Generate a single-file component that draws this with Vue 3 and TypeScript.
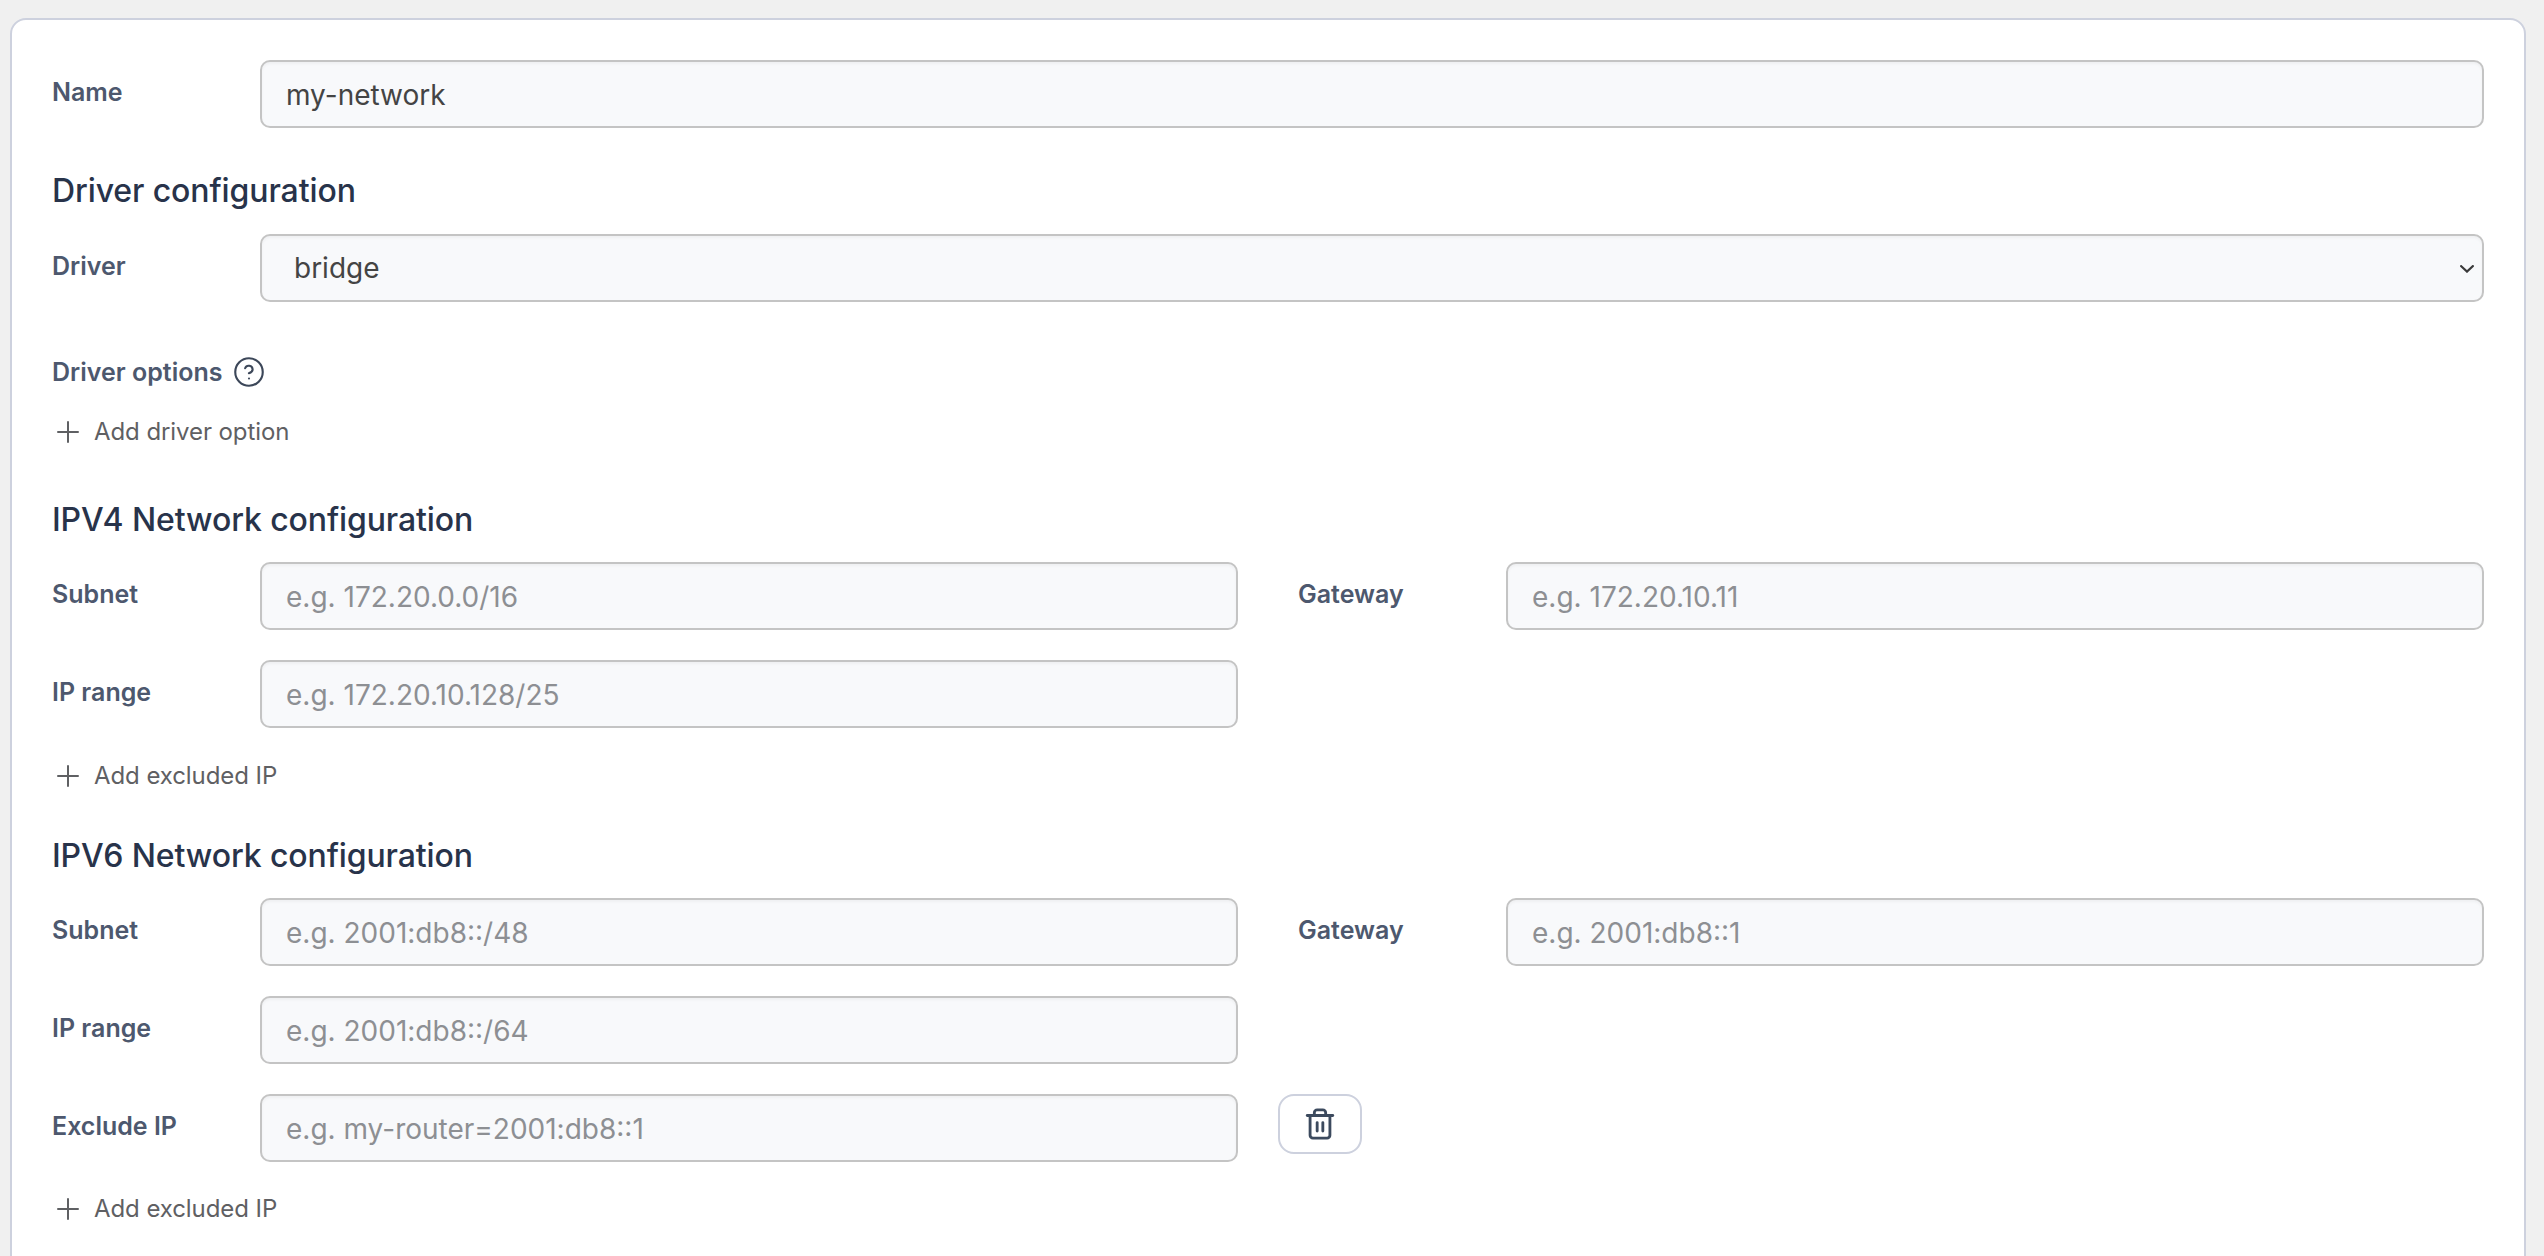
<script setup lang="ts">
interface Field { label: string; placeholder: string }
const ipv4: Field[] = [
  { label: 'Subnet', placeholder: 'e.g. 172.20.0.0/16' },
  { label: 'Gateway', placeholder: 'e.g. 172.20.10.11' },
  { label: 'IP range', placeholder: 'e.g. 172.20.10.128/25' },
]
const ipv6: Field[] = [
  { label: 'Subnet', placeholder: 'e.g. 2001:db8::/48' },
  { label: 'Gateway', placeholder: 'e.g. 2001:db8::1' },
  { label: 'IP range', placeholder: 'e.g. 2001:db8::/64' },
]
</script>

<template>
  <div class="page">
    <form class="card" @submit.prevent>
      <div class="row">
        <label class="label">Name</label>
        <input class="control" value="my-network" />
      </div>

      <h2 class="heading first">Driver configuration</h2>
      <div class="row">
        <label class="label">Driver</label>
        <div class="select-wrap">
          <select class="control select">
            <option>bridge</option>
          </select>
          <svg class="chevron" viewBox="0 0 14 8" fill="none" stroke="currentColor" stroke-width="2.2" stroke-linecap="square" stroke-linejoin="miter">
            <path d="M1.2 1.2 7 6.6l5.8-5.4" />
          </svg>
        </div>
      </div>

      <div class="options-label">
        <span>Driver options</span>
        <svg class="help" viewBox="0 0 24 24" fill="none" stroke="currentColor" stroke-width="1.7" stroke-linecap="round" stroke-linejoin="round">
          <circle cx="12" cy="12" r="11" />
          <path d="M8.9 9a3.1 3.1 0 0 1 6 1c0 2-3 3-3 3" />
          <path d="M12 17.2h.01" />
        </svg>
      </div>
      <button type="button" class="add add-driver">
        <svg viewBox="0 0 24 24" fill="none" stroke="currentColor" stroke-width="2" stroke-linecap="round"><path d="M12 2v20M2 12h20" /></svg>
        Add driver option
      </button>

      <h2 class="heading v4">IPV4 Network configuration</h2>
      <div class="grid">
        <div v-for="f in ipv4" :key="f.label" class="cell">
          <label class="label">{{ f.label }}</label>
          <input class="control" :placeholder="f.placeholder" />
        </div>
      </div>
      <button type="button" class="add add-ip first-ip">
        <svg viewBox="0 0 24 24" fill="none" stroke="currentColor" stroke-width="2" stroke-linecap="round"><path d="M12 2v20M2 12h20" /></svg>
        Add excluded IP
      </button>

      <h2 class="heading v6">IPV6 Network configuration</h2>
      <div class="grid">
        <div v-for="f in ipv6" :key="f.label" class="cell">
          <label class="label">{{ f.label }}</label>
          <input class="control" :placeholder="f.placeholder" />
        </div>
        <div class="cell col-start">
          <label class="label">Exclude IP</label>
          <input class="control" placeholder="e.g. my-router=2001:db8::1" />
        </div>
        <div class="trash-cell">
          <button type="button" class="trash" aria-label="Delete">
            <svg viewBox="0 0 24 24" fill="none" stroke="currentColor" stroke-width="2" stroke-linecap="round" stroke-linejoin="round">
              <path d="M3 6h18" />
              <path d="M5 6v14a2 2 0 0 0 2 2h10a2 2 0 0 0 2-2V6" />
              <path d="M8 6V4a2 2 0 0 1 2-2h4a2 2 0 0 1 2 2v2" />
              <path d="M10 11v6M14 11v6" />
            </svg>
          </button>
        </div>
      </div>
      <button type="button" class="add add-ip">
        <svg viewBox="0 0 24 24" fill="none" stroke="currentColor" stroke-width="2" stroke-linecap="round"><path d="M12 2v20M2 12h20" /></svg>
        Add excluded IP
      </button>
    </form>
  </div>
</template>

<style>
html, body { margin: 0; overflow: hidden; background: #f0f0f0; }
</style>

<style scoped>
.page {
  box-sizing: border-box;
  height: 1256px;
  overflow: hidden;
  padding: 18px 18px 0 10px;
  font-family: Inter, "Liberation Sans", sans-serif;
}
.card {
  box-sizing: border-box;
  min-height: 1400px;
  padding: 40px;
  background: #fff;
  border: 2px solid #cdd1de;
  border-radius: 16px;
  display: flex;
  flex-direction: column;
  align-items: stretch;
}
.row, .cell { display: flex; align-items: flex-start; }
.label {
  flex: 0 0 208px;
  width: 208px;
  padding-top: 16px;
  font-size: 25px;
  line-height: 32px;
  font-weight: 580;
  font-optical-sizing: none;
  color: #4d586e;
}
.control {
  flex: 1 1 auto;
  min-width: 0;
  box-sizing: border-box;
  height: 68px;
  padding: 1px 24px 0;
  font-family: inherit;
  font-size: 28px;
  color: #444;
  background: #f8f9fb;
  border: 2px solid #c4c4c4;
  border-radius: 10px;
  box-shadow: inset 0 2px 3px rgba(0, 0, 0, 0.04);
  outline: none;
}
.control::placeholder { color: #8d8f93; opacity: 1; }
.select-wrap {
  flex: 1 1 auto;
  min-width: 0;
  display: flex;
  position: relative;
}
.select {
  width: 100%;
  padding: 0 0 0 32px;
  appearance: none;
}
.chevron {
  position: absolute;
  right: 10px;
  top: 31px;
  width: 14px;
  height: 8px;
  color: #3a3a3a;
}
.heading {
  font-size: 32px;
  line-height: 46px;
  font-weight: 550;
  letter-spacing: -0.1px;
  color: #28334a;
}
.heading.first { margin: 40px 0 20px; }
.heading.v4 { margin: 45px 0 19px; }
.heading.v6 { margin: 37px 0 19px; }
.options-label {
  display: flex;
  align-items: center;
  gap: 12px;
  margin-top: 50px;
  font-size: 25px;
  line-height: 40px;
  font-weight: 580;
  font-optical-sizing: none;
  color: #4d586e;
}
.help { width: 30px; height: 30px; color: #3c4759; }
.add {
  display: flex;
  align-items: center;
  gap: 14px;
  align-self: flex-start;
  padding: 0 0 0 4px;
  font-family: inherit;
  font-size: 24px;
  line-height: 40px;
  letter-spacing: -0.08px;
  color: #5f6063;
  background: none;
  border: 0;
}
.add svg { width: 24px; height: 24px; }
.add-driver { margin-top: 20px; }
.add-ip { margin-top: 27px; }
.add-ip.first-ip { margin-top: 28px; }
.grid {
  display: grid;
  grid-template-columns: 1fr 1fr;
  column-gap: 60px;
  row-gap: 30px;
}
.col-start { grid-column: 1; }
.trash-cell { display: flex; align-items: flex-start; }
.trash {
  box-sizing: border-box;
  width: 84px;
  height: 60px;
  margin-left: -20px;
  display: flex;
  align-items: center;
  justify-content: center;
  padding: 0;
  background: #fff;
  border: 2px solid #cdd1de;
  border-radius: 16px;
  color: #3c4a5e;
}
.trash svg { width: 34px; height: 34px; }
</style>
